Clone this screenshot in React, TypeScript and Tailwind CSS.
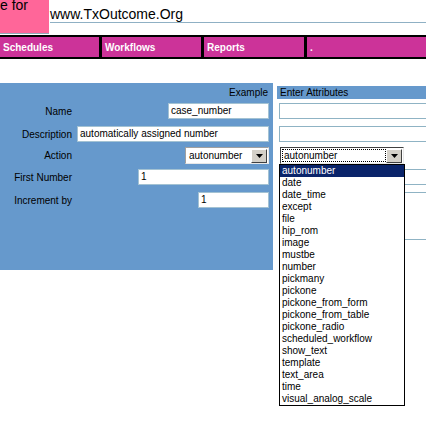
const OPTIONS = [
  "autonumber",
  "date",
  "date_time",
  "except",
  "file",
  "hip_rom",
  "image",
  "mustbe",
  "number",
  "pickmany",
  "pickone",
  "pickone_from_form",
  "pickone_from_table",
  "pickone_radio",
  "scheduled_workflow",
  "show_text",
  "template",
  "text_area",
  "time",
  "visual_analog_scale",
];

const NAV = [
  { label: "Schedules", width: "w-[99px]" },
  { label: "Workflows", width: "w-[99px]" },
  { label: "Reports", width: "w-[100px]" },
  { label: ".", width: "flex-1" },
];

function DropButton() {
  return (
    <span className="flex h-[14px] w-[16px] items-center justify-center border border-t-white border-l-white border-r-[#404040] border-b-[#404040] bg-[#d4d0c8]">
      <svg width="7" height="4" viewBox="0 0 7 4">
        <path d="M0 0h7L3.5 4z" fill="#000" />
      </svg>
    </span>
  );
}

function TextBox({ value, className }: { value: string; className: string }) {
  return (
    <div
      className={`h-[16px] border border-[#a3c2d3] bg-white pl-[2px] leading-[14px] ${className}`}
    >
      {value}
    </div>
  );
}

function Label({ children }: { children: string }) {
  return <div className="w-[72px] shrink-0 text-right">{children}</div>;
}

export default function App() {
  return (
    <div className="h-[426px] w-[426px] overflow-hidden bg-white font-['Liberation_Sans',Arial,sans-serif] text-black">
      {/* title strip */}
      <div className="flex h-[34px]">
        <div className="h-[34px] w-[49px] overflow-hidden border-b border-[#8fa9b8] bg-[#ff6699]">
          <div className="-mt-[2px] text-[14px] leading-[14px]">e for</div>
        </div>
        <div className="ml-[1px] h-[23px] flex-1 border-b border-[#8fb0c4] pt-[6px] text-[14px] leading-[16px]">
          www.TxOutcome.Org
        </div>
      </div>

      {/* nav bar */}
      <nav className="mt-[1px] flex h-[24px] gap-[3px] border-y-2 border-black bg-black">
        {NAV.map((item) => (
          <div
            key={item.label}
            className={`flex items-center bg-[#cc3399] pl-[3px] text-[10px] font-bold text-white ${item.width}`}
          >
            {item.label}
          </div>
        ))}
      </nav>

      <div className="mt-[24px] flex text-[10px]">
        {/* left panel */}
        <div className="flex h-[187px] w-[273px] flex-col bg-[#6699cc] pr-[4px]">
          <div className="mt-[3px] h-[14px] pr-[1px] text-right leading-[14px]">Example</div>

          <div className="mt-[3px] flex h-[16px] items-center">
            <Label>Name</Label>
            <div className="flex flex-1 justify-end">
              <TextBox value="case_number" className="w-[101px]" />
            </div>
          </div>

          <div className="mt-[7px] flex h-[16px] items-center">
            <Label>Description</Label>
            <div className="flex flex-1 justify-end pl-[5px]">
              <TextBox value="automatically assigned number" className="w-full" />
            </div>
          </div>

          <div className="mt-[5px] flex h-[17px] items-center">
            <Label>Action</Label>
            <div className="flex flex-1 justify-end">
              <div className="flex h-[17px] w-[84px] items-center justify-between border border-t-[#a0a0a0] border-l-[#a0a0a0] border-r-[#e8e8e8] border-b-[#e8e8e8] bg-white pl-[3px] pr-[1px]">
                <span>autonumber</span>
                <DropButton />
              </div>
            </div>
          </div>

          <div className="mt-[5px] flex h-[16px] items-center">
            <Label>First Number</Label>
            <div className="flex flex-1 justify-end">
              <TextBox value="1" className="w-[131px]" />
            </div>
          </div>

          <div className="mt-[7px] flex h-[16px] items-center">
            <Label>Increment by</Label>
            <div className="flex flex-1 justify-end">
              <TextBox value="1" className="w-[71px]" />
            </div>
          </div>
        </div>

        {/* right column */}
        <div className="ml-[4px] flex w-[149px] flex-col">
          <div className="mt-[3px] h-[13px] bg-[#6699cc] pl-[3px] leading-[13px]">Enter Attributes</div>
          <div className="ml-[2px] mt-[4px] h-[16px] w-[170px] border border-[#8fb3c4] bg-white" />
          <div className="ml-[2px] mt-[7px] h-[16px] w-[170px] border border-[#8fb3c4] bg-white" />

          <div className="relative ml-[3px] mt-[5px] w-[124px]">
            <div className="flex h-[17px] items-center border border-t-[#404040] border-l-[#404040] border-r-[#e8e8e8] border-b-[#e8e8e8] bg-white pl-[1px] pr-[1px]">
              <span className="flex h-[13px] flex-1 items-center border border-dotted border-black pl-[1px]">
                autonumber
              </span>
              <DropButton />
            </div>
            <ul className="absolute left-[-1px] top-[17px] z-10 w-[126px] border border-black bg-white">
              {OPTIONS.map((opt, i) => (
                <li
                  key={opt}
                  className={`h-[12px] pl-[2px] leading-[12px] ${
                    i === 0 ? "bg-[#0a246a] text-white" : ""
                  }`}
                >
                  {opt}
                </li>
              ))}
            </ul>
          </div>

          <div className="ml-[2px] mt-[5px] h-[16px] w-[170px] border border-[#8fb3c4] bg-white" />
          <div className="ml-[2px] mt-[7px] h-[48px] w-[170px] border border-[#8fb3c4] bg-white" />
        </div>
      </div>
    </div>
  );
}
